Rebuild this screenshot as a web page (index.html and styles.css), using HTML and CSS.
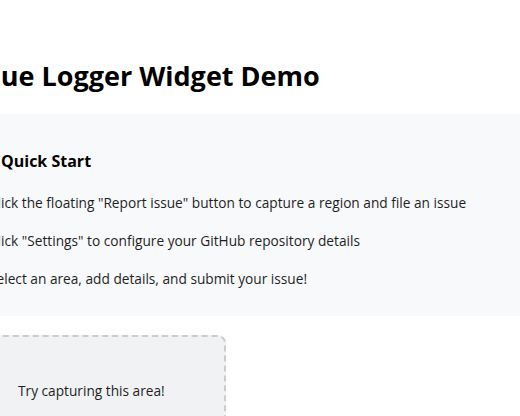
FILE: index.html
```html
<!DOCTYPE html>
<html>
<head>
<meta charset="utf-8">
<title>Issue Logger Widget Demo</title>
<link rel="stylesheet" href="styles.css">
</head>
<body>
<main class="page">
  <h1 class="title">Issue Logger Widget Demo</h1>
  <section class="quick">
    <h3 class="quick-title">Quick Start</h3>
    <ol class="steps">
      <li>Click the floating "Report issue" button to capture a region and file an issue</li>
      <li>Click "Settings" to configure your GitHub repository details</li>
      <li>Select an area, add details, and submit your issue!</li>
    </ol>
  </section>
  <div class="capture">Try capturing this area!</div>
</main>
</body>
</html>
```
FILE: styles.css
```css
html, body {
  margin: 0;
  padding: 0;
  overflow: hidden;
  background: #ffffff;
}

.page {
  margin-left: -35px;
  width: 600px;
  padding-top: 58px;
  font-family: "Open Sans", "Noto Sans", sans-serif;
  color: #1f1f1f;
}

.title {
  margin: 0;
  font-size: 27px;
  font-weight: 700;
  line-height: 36px;
  color: #000;
}

.quick {
  margin-top: 20px;
  background: #f8f9fa;
  padding: 36px 24px 26px 24px;
}

.quick-title {
  margin: 0 0 0 12px;
  font-size: 16px;
  font-weight: 700;
  line-height: 22px;
  color: #000;
}

.steps {
  margin: 20px 0 0 0;
  padding: 0;
  font-size: 13.7px;
  line-height: 22px;
}

.steps li {
  margin-bottom: 16px;
  white-space: nowrap;
}

.steps li:last-child {
  margin-bottom: 0;
}

.capture {
  margin-top: 19px;
  width: 206px;
  height: 140px;
  padding: 43px 0 0 51px;
  background: #f1f2f4;
  border: 2px dashed #c9ccd1;
  border-radius: 8px;
  font-size: 13.7px;
  line-height: 22px;
  color: #1f1f1f;
}
```
